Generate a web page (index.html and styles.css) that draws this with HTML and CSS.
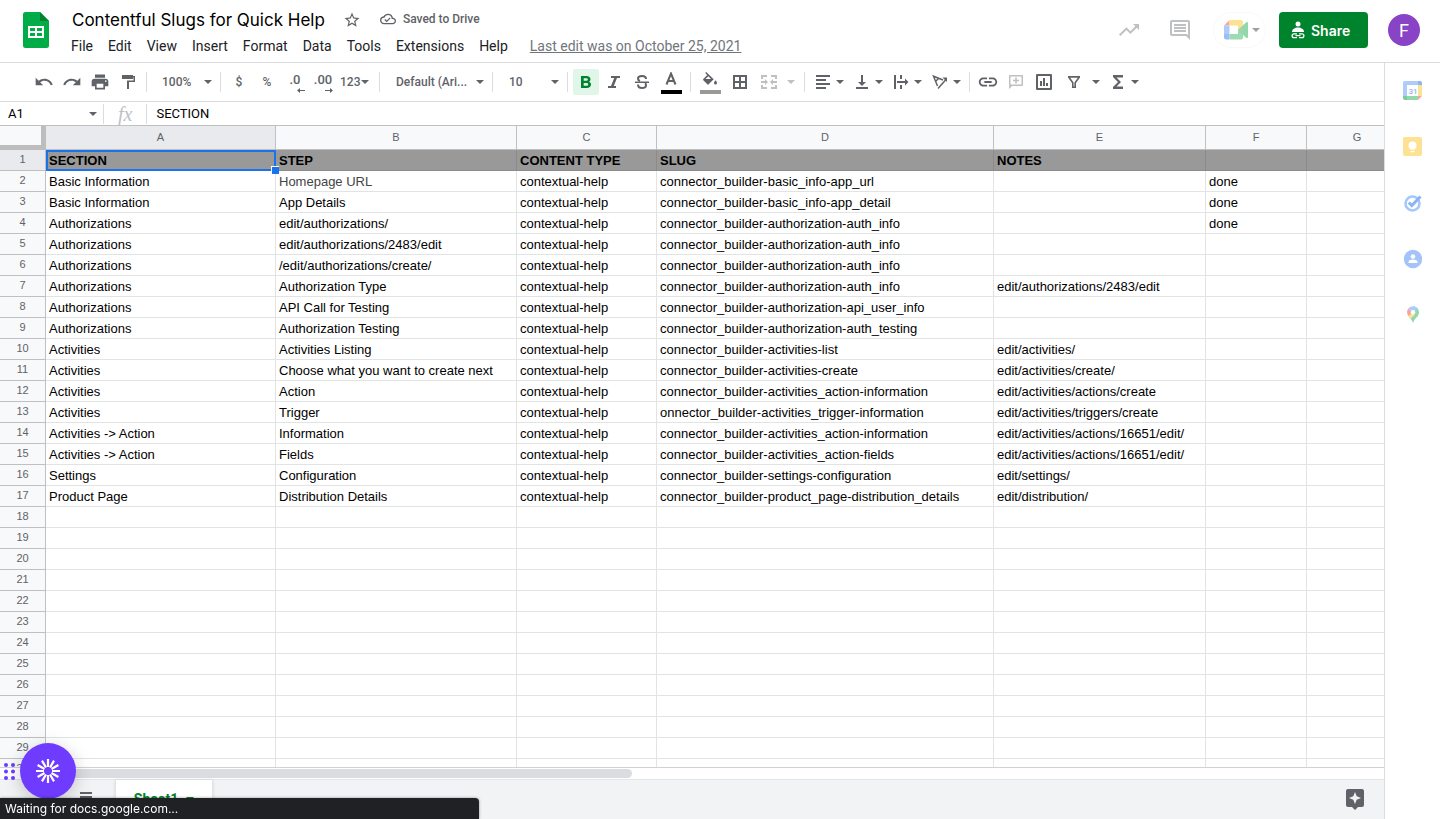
FILE: index.html
```html
<!DOCTYPE html>
<html lang="en">
<head>
<meta charset="utf-8">
<title>Contentful Slugs for Quick Help</title>
<link rel="stylesheet" href="styles.css">
</head>
<body>
<svg class="defs" aria-hidden="true"><defs><symbol id="caret" viewBox="0 0 8 4"><path d="M0 0h8L4 4z"/></symbol></defs></svg>
<div class="app">
  <header class="header">
    <a class="logo" href="#" aria-label="Sheets home"><svg width="26" height="36" viewBox="0 0 26 36"><path fill="#00ac47" d="M2.500 0H17l9 9v24.500A2.500 2.500 0 0 1 23.500 36h-21A2.500 2.500 0 0 1 0 33.500v-31A2.500 2.500 0 0 1 2.500 0z"/><path fill="#00832d" d="M17 0l9 9h-9z"/><path fill="#fff" fill-rule="evenodd" d="M5 14h16v12H5zM7 16v3h5v-3zM14 16v3h5v-3zM7 21v3h5v-3zM14 21v3h5v-3z"/></svg></a>
    <div class="doc">
      <div class="title-row">
        <h1 class="title">Contentful Slugs for Quick Help</h1>
        <button class="plain star" aria-label="Star"><svg width="18" height="18" viewBox="0 0 24 24"><path d="M22 9.240l-7.190-.62L12 2 9.190 8.630 2 9.240l5.460 4.730L5.820 21 12 17.270 18.180 21l-1.630-7.030L22 9.240zM12 15.400l-3.760 2.270 1-4.280-3.320-2.880 4.380-.38L12 6.100l1.710 4.040 4.380.38-3.320 2.880 1 4.280L12 15.400z"/></svg></button>
        <button class="plain saved"><svg width="16" height="16" viewBox="0 0 24 24"><path d="M19.350 10.040A7.490 7.490 0 0 0 12 4C9.110 4 6.600 5.640 5.350 8.040A5.994 5.994 0 0 0 0 14c0 3.310 2.690 6 6 6h13c2.760 0 5-2.240 5-5 0-2.640-2.050-4.780-4.650-4.960zM19 18H6c-2.210 0-4-1.790-4-4s1.790-4 4-4h.71A5.500 5.500 0 0 1 12 6c3.040 0 5.500 2.460 5.500 5.500v.5H19c1.660 0 3 1.340 3 3s-1.340 3-3 3zm-9-3.820l-2.090-2.090L6.500 13.500 10 17l6.010-6.010-1.410-1.410z"/></svg>Saved to Drive</button>
      </div>
      <nav class="menu">
        <button>File</button><button>Edit</button><button>View</button><button>Insert</button><button>Format</button><button>Data</button><button>Tools</button><button>Extensions</button><button>Help</button>
        <a class="last-edit" href="#">Last edit was on October 25, 2021</a>
      </nav>
    </div>
    <div class="actions">
      <button class="plain faded" aria-label="Activity dashboard"><svg width="24" height="24" viewBox="0 0 24 24"><path d="M16 6l2.290 2.290-4.880 4.880-4-4L2 16.590 3.410 18l6-6 4 4 6.300-6.290L22 12V6z"/></svg></button>
      <button class="plain faded" aria-label="Comments"><svg width="24" height="24" viewBox="0 0 24 24"><path d="M21.990 4c0-1.100-.89-2-1.990-2H4c-1.100 0-2 .9-2 2v12c0 1.100.9 2 2 2h14l4 4-.01-18zM20 4v13.170L18.830 16H4V4h16zM6 12h12v2H6zm0-3h12v2H6zm0-3h12v2H6z"/></svg></button>
      <button class="meet" aria-label="Join a call"><svg width="24" height="20" viewBox="0 0 24 20"><path fill="#f9a8a0" d="M0 5.500L5.500 0v5.500z"/><path fill="#fde293" d="M5.500 0H17a2 2 0 0 1 2 2v6l-5 2V5.500H5.500z"/><path fill="#aecbfa" d="M0 5.500h5.500V14H0z"/><path fill="#9bbcfa" d="M0 14h5.500v5.500H2a2 2 0 0 1-2-2z"/><path fill="#9bdcb2" d="M5.500 14H14v-4l5 2v5.500a2 2 0 0 1-2 2H5.500z"/><path fill="#93d7ac" d="M14 10l8.500-8q1.500-.5 1.500 1v14q0 1.500-1.500 1L19 15z"/><path fill="#a1d4a8" d="M14 10l5-4v8z"/></svg><svg class="caret"><use href="#caret"/></svg></button>
      <button class="share"><svg width="14" height="18" viewBox="0 0 14 18"><circle cx="7" cy="3" r="2.500" fill="#fff"/><path fill="#fff" d="M1 11c0-3 3-4.500 6-4.500s6 1.500 6 4.500z"/><path fill="none" stroke="#fff" stroke-width="1.300" d="M6 12.800H3a1.900 1.900 0 0 0 0 3.800h3M8 12.800h3a1.900 1.900 0 0 1 0 3.800H8M4.500 14.700h5"/></svg>Share</button>
      <button class="avatar" aria-label="Account">F</button>
    </div>
  </header>

  <div class="body">
    <main class="editor">
      <div class="toolbar" role="toolbar" aria-label="Main toolbar">
        <button class="tool" aria-label="Undo"><svg width="20" height="20" viewBox="0 0 24 24"><path d="M12.500 8c-2.650 0-5.050.99-6.900 2.600L2 7v9h9l-3.620-3.620c1.390-1.160 3.160-1.880 5.120-1.880 3.540 0 6.550 2.310 7.600 5.500l2.370-.78C21.080 11.030 17.150 8 12.500 8z"/></svg></button>
        <button class="tool" aria-label="Redo"><svg width="20" height="20" viewBox="0 0 24 24"><path d="M18.400 10.600C16.550 8.990 14.150 8 11.500 8c-4.650 0-8.580 3.030-9.960 7.220L3.900 16c1.050-3.190 4.050-5.500 7.600-5.500 1.950 0 3.730.72 5.120 1.880L13 16h9V7l-3.600 3.600z"/></svg></button>
        <button class="tool" aria-label="Print"><svg width="20" height="20" viewBox="0 0 24 24"><path d="M19 8H5c-1.660 0-3 1.340-3 3v6h4v4h12v-4h4v-6c0-1.660-1.340-3-3-3zm-3 11H8v-5h8v5zm3-7c-.55 0-1-.45-1-1s.45-1 1-1 1 .45 1 1-.45 1-1 1zm-1-9H6v4h12V3z"/></svg></button>
        <button class="tool" aria-label="Paint format"><svg width="18" height="18" viewBox="0 0 18 18"><path d="M3 2h11v1h2v6h-6v7H8V7.500h6.500v-3H14V6H3z"/></svg></button>
        <span class="sep"></span>
        <label class="pick zoom"><select aria-label="Zoom"><option>100%</option></select><svg class="caret"><use href="#caret"/></svg></label>
        <span class="sep"></span>
        <button class="tool">$</button>
        <button class="tool">%</button>
        <button class="tool dec" aria-label="Decrease decimal places">.0<svg width="8" height="5" viewBox="0 0 8 5"><path d="M3 0v2h5v1H3v2L0 2.500z"/></svg></button>
        <button class="tool dec" aria-label="Increase decimal places">.00<svg width="8" height="5" viewBox="0 0 8 5"><path d="M5 0v2H0v1h5v2l3-2.500z"/></svg></button>
        <button class="tool formats">123<svg class="caret"><use href="#caret"/></svg></button>
        <span class="sep"></span>
        <label class="pick font"><select aria-label="Font"><option>Default (Ari...</option></select><svg class="caret"><use href="#caret"/></svg></label>
        <span class="sep"></span>
        <label class="pick size"><select aria-label="Font size"><option>10</option></select><svg class="caret"><use href="#caret"/></svg></label>
        <span class="sep"></span>
        <button class="tool active" aria-label="Bold" aria-pressed="true"><svg width="18" height="18" viewBox="0 0 18 18"><path fill-rule="evenodd" d="M4 3h5.500C12 3 13.500 4.300 13.500 6.200c0 1.200-.6 2-1.500 2.500 1.300.4 2 1.500 2 2.800C14 13.700 12.300 15 9.800 15H4zM6.700 5.200v2.600h2.500c1 0 1.600-.5 1.600-1.300S10.200 5.200 9.200 5.200zM6.700 10v2.800h2.800c1.100 0 1.700-.5 1.700-1.400S10.600 10 9.500 10z"/></svg></button>
        <button class="tool" aria-label="Italic"><svg width="18" height="18" viewBox="0 0 18 18"><path d="M6 3h9v2h-3L8.800 13H11v2H3v-2h3L9.200 5H6z"/></svg></button>
        <button class="tool" aria-label="Strikethrough"><svg width="18" height="18" viewBox="0 0 18 18"><path d="M2 8.500h14V10H2z"/><path fill="none" stroke="#5f6368" stroke-width="2" d="M13 6c0-2-1.600-3-4-3S5 4.200 5 5.700c0 1.200.8 1.900 2 2.300M5 11.500C5 13.700 6.500 15 9 15s4-1.200 4-2.800c0-.9-.4-1.600-1-2"/></svg></button>
        <button class="tool swatch text-color" aria-label="Text color"><svg width="14" height="14" viewBox="0 0 14 14"><path fill="none" stroke="#5f6368" stroke-width="2" d="M2.500 12.500L7 1.500l4.500 11M4.200 9h5.600"/></svg></button>
        <span class="sep"></span>
        <button class="tool swatch fill-color" aria-label="Fill color"><svg width="16" height="14" viewBox="0 0 16 14"><path fill-rule="evenodd" d="M4.200 0L3.200 1l2 2L1.300 7a1 1 0 0 0 0 1.300l4 4a1 1 0 0 0 1.400 0l5-5zM6.300 4.200L9 7H3.500zM13.500 8.200s-1.500 1.700-1.500 2.700a1.500 1.500 0 0 0 3 0c0-1-1.500-2.700-1.500-2.700z"/></svg></button>
        <button class="tool wide" aria-label="Borders"><svg width="18" height="18" viewBox="0 0 18 18"><path fill-rule="evenodd" d="M2 2h14v14H2zM4 4v4h4V4zM10 4v4h4V4zM4 10v4h4v-4zM10 10v4h4v-4z"/></svg></button>
        <button class="tool combo merge" disabled aria-label="Merge cells"><svg width="18" height="18" viewBox="0 0 18 18"><path d="M1 2h6v2H3v2H1zM11 2h6v4h-2V4h-4zM1 12h2v2h4v2H1zM15 12h2v4h-6v-2h4zM1 8h4V6l3 3-3 3v-2H1zM17 8h-4V6l-3 3 3 3v-2h4z"/></svg><svg class="caret"><use href="#caret"/></svg></button>
        <span class="sep"></span>
        <button class="tool combo" aria-label="Horizontal align"><svg width="18" height="18" viewBox="0 0 18 18"><path d="M2 2h14v2H2zM2 6h10v2H2zM2 10h14v2H2zM2 14h10v2H2z"/></svg><svg class="caret"><use href="#caret"/></svg></button>
        <button class="tool combo" aria-label="Vertical align"><svg width="18" height="18" viewBox="0 0 18 18"><path d="M8 2h2v7h3l-4 4-4-4h3zM3 14h12v2H3z"/></svg><svg class="caret"><use href="#caret"/></svg></button>
        <button class="tool combo" aria-label="Text wrapping"><svg width="18" height="18" viewBox="0 0 18 18"><path d="M2 2h2v14H2zM8 2h2v4H8zM8 12h2v4H8zM5 8h8V5.500L16.500 9 13 12.500V10H5z"/></svg><svg class="caret"><use href="#caret"/></svg></button>
        <button class="tool combo" aria-label="Text rotation"><svg width="18" height="18" viewBox="0 0 18 18"><path fill="none" stroke="#5f6368" stroke-width="1.500" d="M6.500 13L2.500 3.200 12 7M4.500 8.500L8 5M7 15.500l8-9"/><path d="M11.500 4.500H16V9z"/></svg><svg class="caret"><use href="#caret"/></svg></button>
        <span class="sep"></span>
        <button class="tool" aria-label="Insert link"><svg width="22" height="22" viewBox="0 0 24 24"><path d="M3.900 12c0-1.710 1.390-3.100 3.100-3.100h4V7H7c-2.760 0-5 2.240-5 5s2.240 5 5 5h4v-1.900H7c-1.710 0-3.100-1.390-3.100-3.100zM8 13h8v-2H8v2zm9-6h-4v1.900h4c1.710 0 3.100 1.390 3.100 3.100s-1.390 3.100-3.100 3.100h-4V17h4c2.760 0 5-2.240 5-5s-2.240-5-5-5z"/></svg></button>
        <button class="tool" disabled aria-label="Insert comment"><svg width="18" height="18" viewBox="0 0 18 18"><path fill-rule="evenodd" d="M3 2h12a1 1 0 0 1 1 1v9a1 1 0 0 1-1 1H5l-3 3V3a1 1 0 0 1 1-1zM3.500 3.500v8h11v-8zM8.200 4.500h1.600v2.200H12v1.600H9.800v2.200H8.200V8.300H6V6.700h2.200z"/></svg></button>
        <button class="tool" aria-label="Insert chart"><svg width="18" height="18" viewBox="0 0 18 18"><path fill-rule="evenodd" d="M2 1h14a1 1 0 0 1 1 1v14a1 1 0 0 1-1 1H2a1 1 0 0 1-1-1V2a1 1 0 0 1 1-1zM3 3v12h12V3zM5 8h2v5H5zM8 5h2v8H8zM11 10h2v3h-2z"/></svg></button>
        <button class="tool combo filter" aria-label="Create a filter"><svg width="18" height="18" viewBox="0 0 18 18"><path fill-rule="evenodd" d="M3 3h12v1.500L11 10v5H7v-5L3 4.500zM5.200 4.700L8.600 9.500v4h.8v-4l3.400-4.800z"/></svg><svg class="caret"><use href="#caret"/></svg></button>
        <button class="tool combo" aria-label="Functions"><svg width="18" height="18" viewBox="0 0 18 18"><path d="M4 2h10v2.500H7.500L12 9l-4.500 4.500H14V16H4v-2l5-5-5-5z"/></svg><svg class="caret"><use href="#caret"/></svg></button>
      </div>

      <div class="formula">
        <input class="name-box" aria-label="Name box" value="A1">
        <svg class="caret"><use href="#caret"/></svg>
        <span class="fx">fx</span>
        <input class="formula-input" aria-label="Formula" value="SECTION">
      </div>

      <div class="grid">
        <table>
          <colgroup><col class="c-row"><col class="c-a"><col class="c-b"><col class="c-c"><col class="c-d"><col class="c-e"><col class="c-f"><col class="c-g"></colgroup>
          <thead><tr><th class="corner"></th><th class="on">A</th><th>B</th><th>C</th><th>D</th><th>E</th><th>F</th><th>G</th></tr></thead>
          <tbody>
          <tr class="top"><th class="on">1</th><td class="selected">SECTION</td><td>STEP</td><td>CONTENT TYPE</td><td>SLUG</td><td>NOTES</td><td></td><td></td></tr>
          <tr><th>2</th><td>Basic Information</td><td class="soft">Homepage URL</td><td>contextual-help</td><td>connector_builder-basic_info-app_url</td><td></td><td>done</td><td></td></tr>
          <tr><th>3</th><td>Basic Information</td><td>App Details</td><td>contextual-help</td><td>connector_builder-basic_info-app_detail</td><td></td><td>done</td><td></td></tr>
          <tr><th>4</th><td>Authorizations</td><td>edit/authorizations/</td><td>contextual-help</td><td>connector_builder-authorization-auth_info</td><td></td><td>done</td><td></td></tr>
          <tr><th>5</th><td>Authorizations</td><td>edit/authorizations/2483/edit</td><td>contextual-help</td><td>connector_builder-authorization-auth_info</td><td></td><td></td><td></td></tr>
          <tr><th>6</th><td>Authorizations</td><td>/edit/authorizations/create/</td><td>contextual-help</td><td>connector_builder-authorization-auth_info</td><td></td><td></td><td></td></tr>
          <tr><th>7</th><td>Authorizations</td><td>Authorization Type</td><td>contextual-help</td><td>connector_builder-authorization-auth_info</td><td>edit/authorizations/2483/edit</td><td></td><td></td></tr>
          <tr><th>8</th><td>Authorizations</td><td>API Call for Testing</td><td>contextual-help</td><td>connector_builder-authorization-api_user_info</td><td></td><td></td><td></td></tr>
          <tr><th>9</th><td>Authorizations</td><td>Authorization Testing</td><td>contextual-help</td><td>connector_builder-authorization-auth_testing</td><td></td><td></td><td></td></tr>
          <tr><th>10</th><td>Activities</td><td>Activities Listing</td><td>contextual-help</td><td>connector_builder-activities-list</td><td>edit/activities/</td><td></td><td></td></tr>
          <tr><th>11</th><td>Activities</td><td>Choose what you want to create next</td><td>contextual-help</td><td>connector_builder-activities-create</td><td>edit/activities/create/</td><td></td><td></td></tr>
          <tr><th>12</th><td>Activities</td><td>Action</td><td>contextual-help</td><td>connector_builder-activities_action-information</td><td>edit/activities/actions/create</td><td></td><td></td></tr>
          <tr><th>13</th><td>Activities</td><td>Trigger</td><td>contextual-help</td><td>onnector_builder-activities_trigger-information</td><td>edit/activities/triggers/create</td><td></td><td></td></tr>
          <tr><th>14</th><td>Activities -&gt; Action</td><td>Information</td><td>contextual-help</td><td>connector_builder-activities_action-information</td><td>edit/activities/actions/16651/edit/</td><td></td><td></td></tr>
          <tr><th>15</th><td>Activities -&gt; Action</td><td>Fields</td><td>contextual-help</td><td>connector_builder-activities_action-fields</td><td>edit/activities/actions/16651/edit/</td><td></td><td></td></tr>
          <tr><th>16</th><td>Settings</td><td>Configuration</td><td>contextual-help</td><td>connector_builder-settings-configuration</td><td>edit/settings/</td><td></td><td></td></tr>
          <tr><th>17</th><td>Product Page</td><td>Distribution Details</td><td>contextual-help</td><td>connector_builder-product_page-distribution_details</td><td>edit/distribution/</td><td></td><td></td></tr>
          <tr><th>18</th><td></td><td></td><td></td><td></td><td></td><td></td><td></td></tr>
          <tr><th>19</th><td></td><td></td><td></td><td></td><td></td><td></td><td></td></tr>
          <tr><th>20</th><td></td><td></td><td></td><td></td><td></td><td></td><td></td></tr>
          <tr><th>21</th><td></td><td></td><td></td><td></td><td></td><td></td><td></td></tr>
          <tr><th>22</th><td></td><td></td><td></td><td></td><td></td><td></td><td></td></tr>
          <tr><th>23</th><td></td><td></td><td></td><td></td><td></td><td></td><td></td></tr>
          <tr><th>24</th><td></td><td></td><td></td><td></td><td></td><td></td><td></td></tr>
          <tr><th>25</th><td></td><td></td><td></td><td></td><td></td><td></td><td></td></tr>
          <tr><th>26</th><td></td><td></td><td></td><td></td><td></td><td></td><td></td></tr>
          <tr><th>27</th><td></td><td></td><td></td><td></td><td></td><td></td><td></td></tr>
          <tr><th>28</th><td></td><td></td><td></td><td></td><td></td><td></td><td></td></tr>
          <tr><th>29</th><td></td><td></td><td></td><td></td><td></td><td></td><td></td></tr>
          <tr><th>30</th><td></td><td></td><td></td><td></td><td></td><td></td><td></td></tr>
          </tbody>
        </table>
      </div>
      <div class="scroll"><div class="thumb"></div></div>
      <footer class="sheets">
        <button class="plain all" aria-label="All sheets"><svg width="12" height="10" viewBox="0 0 12 10"><path d="M0 0h12v2H0zM0 4h12v2H0zM0 8h12v2H0z"/></svg></button>
        <button class="tab">Sheet1<svg class="caret"><use href="#caret"/></svg></button>
        <button class="plain explore" aria-label="Explore"><svg width="18" height="22" viewBox="0 0 18 22"><path fill-rule="evenodd" d="M2 0h14a2 2 0 0 1 2 2v14a2 2 0 0 1-2 2h-4l-3 3-3-3H2a2 2 0 0 1-2-2V2a2 2 0 0 1 2-2zM9 3L7.300 7.300 3 9l4.300 1.700L9 15l1.700-4.300L15 9l-4.300-1.700z"/></svg></button>
      </footer>
    </main>

    <aside class="side" aria-label="Side panel">
      <button class="plain" aria-label="Calendar"><svg width="20" height="20" viewBox="0 0 20 20"><path fill="#aecbfa" d="M2 0h13v4H4v11H0V2a2 2 0 0 1 2-2z"/><path fill="#8fb3f5" d="M15 0h2a2 2 0 0 1 2 2v2h-4z"/><path fill="#fde293" d="M15 4h4v11h-4z"/><path fill="#93d7ac" d="M4 15h11v4H4z"/><path fill="#7ccb9c" d="M0 15h4v4H2a2 2 0 0 1-2-2z"/><path fill="#f6a49c" d="M15 15h4l-4 4z"/><text class="cal" x="10" y="13" text-anchor="middle">31</text></svg></button>
      <button class="plain" aria-label="Keep"><svg width="20" height="20" viewBox="0 0 20 20"><rect width="19" height="19" rx="2" fill="#fde293"/><circle cx="9.500" cy="8.500" r="4" fill="#fff"/><path fill="#fff" d="M7.500 11h4v1.500h-4zM7.500 14h4v1.200h-4z"/></svg></button>
      <button class="plain" aria-label="Tasks"><svg width="20" height="20" viewBox="0 0 20 20"><circle cx="9.500" cy="10.500" r="7" fill="none" stroke="#a3c8fb" stroke-width="2.600"/><path fill="none" stroke="#8ab4f5" stroke-width="3" d="M5.800 9.500l3 3L17.500 3.500"/></svg></button>
      <button class="plain" aria-label="Contacts"><svg width="20" height="20" viewBox="0 0 20 20"><circle cx="10" cy="10" r="9.200" fill="#a3c3f9"/><circle cx="10" cy="7.500" r="2.300" fill="#fff"/><path fill="#fff" d="M5.500 14v-1c0-1.600 2.500-2.400 4.500-2.400s4.500.8 4.500 2.400v1z"/></svg></button>
      <button class="plain" aria-label="Maps"><svg width="20" height="20" viewBox="0 0 20 20"><path fill="#93d7ac" d="M16 7.500c0 4-4 5-6 10.500C9 15 7.500 13.500 6 12l8.500-9Q16 5 16 7.500z"/><path fill="#fde293" d="M5.500 11.300L8 8l4 1.500-4.500 4.300Q6.300 12.500 5.500 11.300z"/><path fill="#f6a49c" d="M5.300 3.500L8 6v3l-2.500 2.300C3.500 8.500 3.700 5.500 5.300 3.500z"/><path fill="#aecbfa" d="M5.300 3.500C7.500.8 12.300.4 14.600 3.300L11.500 7 8 6z"/><circle cx="10" cy="7.200" r="2.200" fill="#fff"/></svg></button>
    </aside>
  </div>
</div>
<div class="recorder">
  <svg width="11" height="17" viewBox="0 0 11 17"><g fill="#6e3bff"><circle cx="2" cy="2" r="2"/><circle cx="9" cy="2" r="2"/><circle cx="2" cy="8.500" r="2"/><circle cx="9" cy="8.500" r="2"/><circle cx="2" cy="15" r="2"/><circle cx="9" cy="15" r="2"/></g></svg>
  <button class="bubble" aria-label="Record"><svg width="24" height="24" viewBox="-12 -12 24 24"><g stroke="#fff" stroke-width="2.200"><path d="M0-12v8M0 12V4M-12 0h8M12 0H4"/><path d="M0-12v8M0 12V4M-12 0h8M12 0H4" transform="rotate(30)"/><path d="M0-12v8M0 12V4M-12 0h8M12 0H4" transform="rotate(60)"/></g></svg></button>
</div>
<div class="status" role="status">Waiting for docs.google.com...</div>
</body>
</html>
```
FILE: styles.css
```css
* { box-sizing: border-box; }
body { margin: 0; font-family: Roboto, "Liberation Sans", sans-serif; background: #fff; color: #202124; overflow: hidden; }
button, input, select { font: inherit; color: inherit; border: 0; background: none; padding: 0; margin: 0; outline: 0; }
svg { display: block; flex: none; fill: currentColor; }
.defs { position: absolute; width: 0; height: 0; }
.caret { width: 8px; height: 4px; color: #5f6368; }
.plain { display: flex; align-items: center; justify-content: center; color: #5f6368; }
.app { display: flex; flex-direction: column; height: 100vh; }

.header { display: flex; height: 63px; flex: none; border-bottom: 1px solid #dadce0; padding-right: 20px; }
.logo { padding: 12px 22px 0 23px; }
.doc { padding-top: 8px; flex: 1; }
.title-row { display: flex; align-items: center; height: 24px; }
.title { margin: 0 0 0 1px; font: 400 17px/24px Inter, sans-serif; color: #000; white-space: nowrap; }
.star { margin-left: 18px; }
.saved { margin-left: 19px; gap: 7px; font-size: 12px; line-height: 14px; font-weight: 500; padding-bottom: 2px; }
.menu { display: flex; gap: 15px; align-items: center; height: 28px; font-size: 14px; white-space: nowrap; }
.last-edit { color: #70757a; text-decoration: underline; margin-left: 7px; }
.actions { display: flex; align-items: center; height: 60px; }
.faded { opacity: .4; margin-right: 27px; }
.meet { display: flex; align-items: center; gap: 4px; width: 53px; height: 36px; padding-left: 10px; margin-left: -6px; margin-right: 13px; border-radius: 18px; border: 1px solid #f8f9fa; }
.meet .caret { opacity: .6; }
.share { display: flex; align-items: center; gap: 6px; height: 36px; width: 89px; padding-left: 12px; border-radius: 4px; background: #00832d; color: #fff; font: 600 14px Inter, sans-serif; }
.avatar { width: 32px; height: 32px; margin-left: 20px; border-radius: 50%; background: #8843c7; color: #fff; font-size: 18px; }

.body { display: flex; flex: 1; min-height: 0; }
.editor { flex: 1; min-width: 0; display: flex; flex-direction: column; }
.side { width: 56px; border-left: 1px solid #dadce0; display: flex; flex-direction: column; gap: 36px; align-items: center; padding-top: 18px; }
.cal { font: 500 8px Roboto, sans-serif; fill: #8fb3f5; }

.toolbar { display: flex; align-items: center; height: 39px; flex: none; padding-left: 30px; border-bottom: 1px solid #dadce0; color: #5f6368; font-size: 12px; font-weight: 500; overflow: hidden; }
.tool { display: flex; align-items: center; justify-content: center; width: 28px; height: 26px; flex: none; }
.tool:disabled { opacity: .4; color: #5f6368; }
.sep { width: 1px; height: 20px; margin: 0 4px; background: #dadce0; flex: none; }
.pick { display: flex; align-items: center; padding-right: 4px; flex: none; }
.pick select { appearance: none; flex: 1; min-width: 0; }
.zoom { width: 65px; padding-left: 11px; }
.font { width: 104px; padding-left: 12px; }
.size { width: 66px; padding-left: 12px; }
.dec { flex-direction: column; height: 20px; font-size: 13px; line-height: 16px; }
.dec svg { margin-left: 12px; }
.formats { width: 38px; gap: 1px; justify-content: flex-start; padding-left: 3px; }
.active { width: 26px; margin: 0 1px; background: #e2f5e9; border-radius: 2px; color: #00832d; }
.swatch { flex-direction: column; gap: 4px; width: 30px; padding-top: 2px; }
.swatch::after { content: ""; width: 21px; height: 4px; background: #000; }
.fill-color::after { background: #999; }
.wide { width: 30px; }
.combo { width: 39px; gap: 4px; }
.merge { width: 45px; gap: 9px; }
.filter { width: 46px; gap: 9px; padding-left: 2px; }

.formula { display: flex; align-items: center; height: 24px; flex: none; border-bottom: 1px solid #c0c0c0; font-size: 13px; color: #000; }
.name-box { width: 89px; padding-left: 8px; }
.fx { margin-left: 6px; padding: 0 14px; border: solid #dadce0; border-width: 0 1px; color: #bdc1c6; font: italic 20px/20px "Liberation Serif", serif; }
.formula-input { flex: 1; min-width: 0; padding-left: 9px; }

.grid { flex: 1; min-height: 0; overflow: hidden; border-bottom: 1px solid #d0d2d5; }
table { width: 1408px; table-layout: fixed; border-collapse: separate; border-spacing: 0; font: 13px/18px "Liberation Sans", Arial, sans-serif; color: #000; }
.c-row { width: 46px; } .c-a { width: 230px; } .c-b { width: 241px; } .c-c { width: 140px; }
.c-d { width: 337px; } .c-e { width: 212px; } .c-f, .c-g { width: 101px; }
th { height: 21px; padding: 0 0 2px; background: #f8f9fa; border: solid #c0c0c0; border-width: 0 1px 1px 0; font-size: 11px; font-weight: 400; line-height: 18px; color: #5f6368; text-align: center; }
thead th { height: 24px; }
.on { background: #e8eaed; }
th.corner { border-width: 0 5px 5px 0; border-color: #bdbdbd; }
td { height: 21px; padding: 2px 3px 0; border: solid #e2e3e3; border-width: 0 1px 1px 0; white-space: nowrap; }
.top td { background: #999; border-color: #8b8b8b; font-weight: 700; }
.top .selected { position: relative; outline: 2px solid #1a73e8; outline-offset: -2px; }
.selected::after { content: ""; position: absolute; right: -4px; bottom: -4px; width: 7px; height: 7px; background: #1a73e8; border: solid #fff; border-width: 1px 0 0 1px; }
.soft { color: #444; }

.scroll { height: 11px; flex: none; padding: 1px 0 0 46px; }
.thumb { width: 586px; max-width: 50%; height: 9px; border-radius: 5px; background: #dadce0; }
.sheets { display: flex; height: 40px; flex: none; background: #f1f3f4; border-top: 1px solid #e3e5e8; padding-right: 20px; }
.all { width: 12px; margin-left: 80px; }
.sheets .all { height: 34px; }
.tab { display: flex; align-items: center; justify-content: center; gap: 8px; width: 96px; margin-left: 24px; padding-bottom: 2px; background: #fff; color: #00832d; font-size: 14px; font-weight: 700; box-shadow: 0 1px 3px 1px rgba(60, 64, 67, .15); }
.tab .caret { color: #00832d; }
.explore { margin-left: auto; }

.recorder { position: fixed; left: 4px; bottom: 20px; display: flex; align-items: center; gap: 5px; }
.bubble { display: grid; place-items: center; width: 56px; height: 56px; border-radius: 50%; background: #6e3bff; box-shadow: 0 4px 18px rgba(0, 0, 0, .2); }
.status { position: fixed; left: 0; bottom: 0; width: 479px; height: 21px; padding-left: 5px; border-radius: 0 4px 0 0; background: #202124; color: #fff; font: 12px/21px Inter, sans-serif; box-shadow: 0 0 3px rgba(0, 0, 0, .4); }
```
